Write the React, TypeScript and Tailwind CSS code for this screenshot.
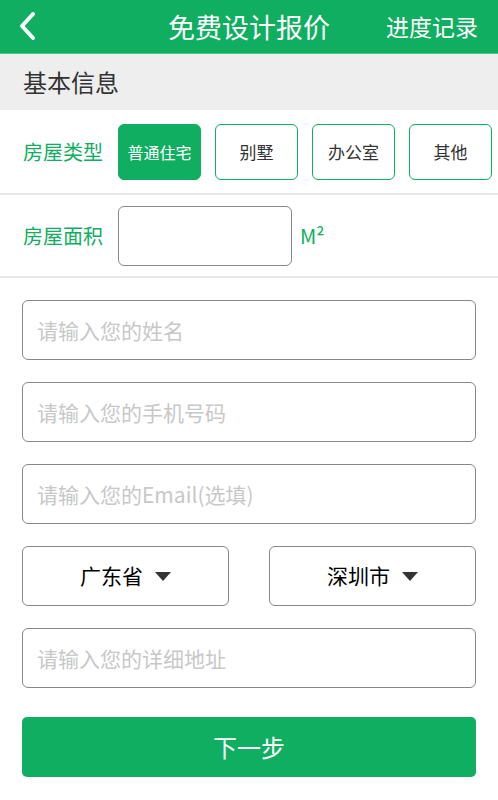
import { useState } from "react";

const font = { fontFamily: '"Noto Sans CJK SC", "Noto Sans", sans-serif' };

const types = ["普通住宅", "别墅", "办公室", "其他"];

const Caret = () => (
  <svg width="16" height="9" viewBox="0 0 16 9" className="ml-[12px]">
    <path d="M0 0h16L8 9z" fill="#333" />
  </svg>
);

const App = () => {
  const [type, setType] = useState(0);

  return (
    <div className="min-h-screen w-[498px] bg-white" style={font}>
      {/* Header */}
      <div className="relative flex h-[54px] items-center justify-center border-b border-[#4cc88a] bg-[#0fae60]">
        <svg width="18" height="30" viewBox="0 0 18 30" className="absolute left-[18px] top-[11px]">
          <path d="M15 3L4 15l11 12" stroke="#fff" strokeWidth="4" fill="none" strokeLinecap="round" strokeLinejoin="round" />
        </svg>
        <span className="text-[27px] leading-none text-white">免费设计报价</span>
        <span className="absolute right-[20px] top-[15px] text-[23px] leading-none text-white">进度记录</span>
      </div>

      {/* Section */}
      <div className="flex h-[56px] items-center bg-[#eeeeee] px-[23px] text-[24px] text-[#333]">基本信息</div>

      <div className="flex h-[85px] items-center border-b-2 border-[#e8e8e8] pl-[23px]">
        <span className="mr-[15px] text-[20px] text-[#0fae60]">房屋类型</span>
        <div className="flex gap-[14px]">
          {types.map((t, i) => (
            <button
              key={t}
              onClick={() => setType(i)}
              className={`flex h-[56px] w-[83px] items-center justify-center rounded-[6px] border-[1.5px] border-[#0fae60] ${
                i === type ? "bg-[#0fae60] text-[16px] text-white" : "bg-white text-[17px] text-[#333]"
              }`}
            >
              {t}
            </button>
          ))}
        </div>
      </div>

      <div className="flex h-[83px] items-center border-b-2 border-[#e8e8e8] pl-[23px]">
        <span className="mr-[15px] text-[20px] text-[#0fae60]">房屋面积</span>
        <input className="h-[60px] w-[174px] rounded-[6px] border-[1.5px] border-[#888] outline-none" />
        <span className="ml-[8px] text-[20px] text-[#0fae60]">M²</span>
      </div>

      {/* Form */}
      <div className="flex flex-col gap-[22px] px-[22px] pt-[22px]">
        {["请输入您的姓名", "请输入您的手机号码", "请输入您的Email(选填)"].map((p) => (
          <input
            key={p}
            placeholder={p}
            className="h-[60px] w-full rounded-[6px] border-[1.5px] border-[#888] px-[14px] text-[21px] outline-none placeholder:text-[#c8c8c8]"
          />
        ))}
        <div className="flex justify-between">
          {["广东省", "深圳市"].map((c) => (
            <div
              key={c}
              className="flex h-[60px] w-[207px] items-center justify-center rounded-[6px] border-[1.5px] border-[#888] text-[21px] text-black"
            >
              {c}
              <Caret />
            </div>
          ))}
        </div>
        <input
          placeholder="请输入您的详细地址"
          className="h-[60px] w-full rounded-[6px] border-[1.5px] border-[#888] px-[14px] text-[21px] outline-none placeholder:text-[#c8c8c8]"
        />
        <button className="mt-[7px] h-[60px] w-full rounded-[5px] bg-[#0fae60] text-[24px] text-white">下一步</button>
      </div>
    </div>
  );
};

export default App;
